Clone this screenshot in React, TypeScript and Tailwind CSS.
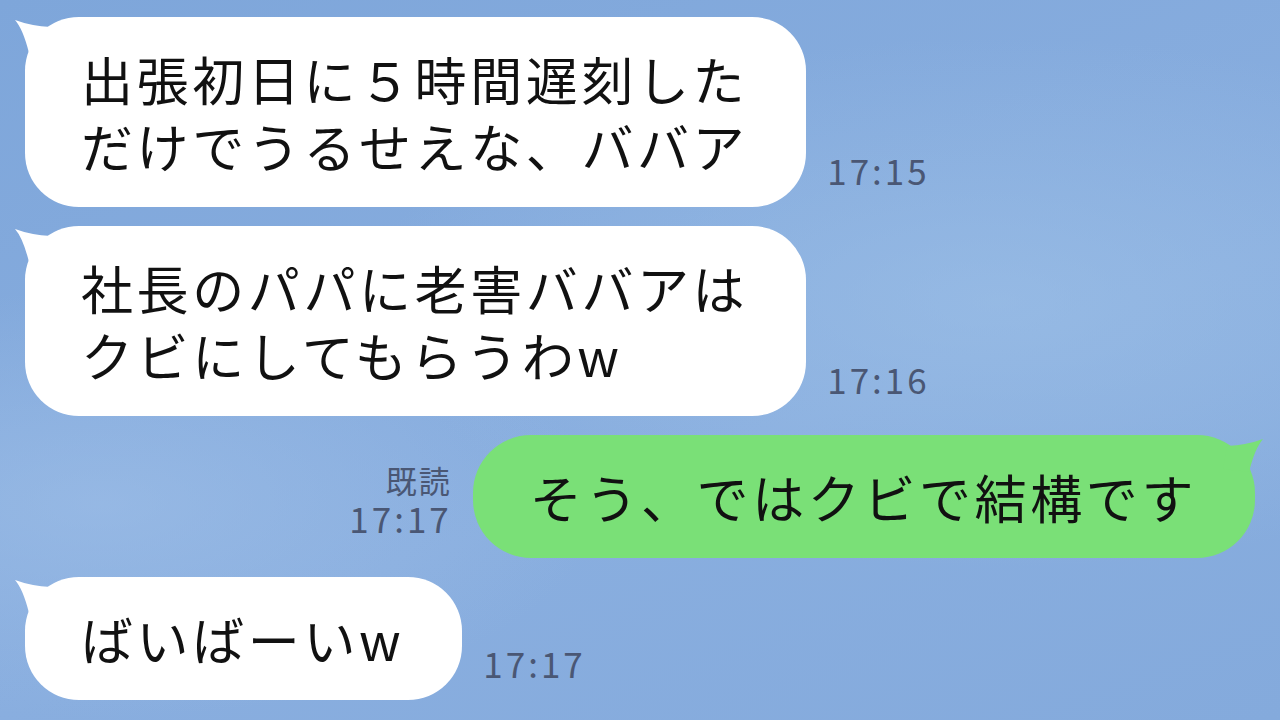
type Side = "left" | "right";

function Tail({ side, color }: { side: Side; color: string }) {
  const pos =
    side === "left"
      ? "absolute -left-[10px] top-[3px]"
      : "absolute -right-[8px] top-[4px] -scale-x-100";
  return (
    <svg className={pos} width="44" height="40" viewBox="0 0 44 40" fill={color}>
      <path d="M0 0 Q8 9 14 33 L40 30 L36 7 Q16 6 0 0 Z" />
    </svg>
  );
}

function Received({ lines, time }: { lines: string[]; time: string }) {
  return (
    <div className="flex items-end gap-[21px]">
      <div className="relative rounded-[54px] bg-white py-[28px] pl-[56px] pr-[58px] text-[52px] leading-[67px] tracking-[3.6px] text-[#111]">
        <Tail side="left" color="#ffffff" />
        {lines.map((l) => (
          <p key={l} className="relative whitespace-nowrap">
            {l}
          </p>
        ))}
      </div>
      <span className="mb-[20px] text-[35px] leading-none tracking-[3px] text-[#4a5774]">
        {time}
      </span>
    </div>
  );
}

export default function App() {
  return (
    <div className="flex h-[720px] w-[1280px] flex-col gap-[19px] overflow-hidden bg-[#85abdd] bg-[radial-gradient(ellipse_at_78%_42%,rgba(160,195,232,0.55),transparent_45%),radial-gradient(ellipse_at_8%_70%,rgba(165,196,234,0.5),transparent_30%),linear-gradient(160deg,#7ea6da,#89aedf_60%,#84aadc)] pl-[25px] pr-[25px] pt-[17px] font-['Noto_Sans_CJK_JP',sans-serif]">
      <Received
        lines={["出張初日に５時間遅刻した", "だけでうるせえな、ババア"]}
        time="17:15"
      />
      <Received
        lines={["社長のパパに老害ババアは", "クビにしてもらうわw"]}
        time="17:16"
      />

      <div className="flex items-end justify-end gap-[21px]">
        <div className="mb-[21px] flex flex-col items-end text-[#4a5774]">
          <span className="text-[31px] leading-[38px] tracking-[2px]">既読</span>
          <span className="text-[35px] leading-[38px] tracking-[3px]">17:17</span>
        </div>
        <div className="relative rounded-[58px] bg-[#7ae077] py-[28px] pl-[57px] pr-[58px] text-[52px] leading-[67px] tracking-[3.6px] text-[#111]">
          <Tail side="right" color="#7ae077" />
          <p className="relative whitespace-nowrap">そう、ではクビで結構です</p>
        </div>
      </div>

      <Received lines={["ばいばーいw"]} time="17:17" />
    </div>
  );
}
